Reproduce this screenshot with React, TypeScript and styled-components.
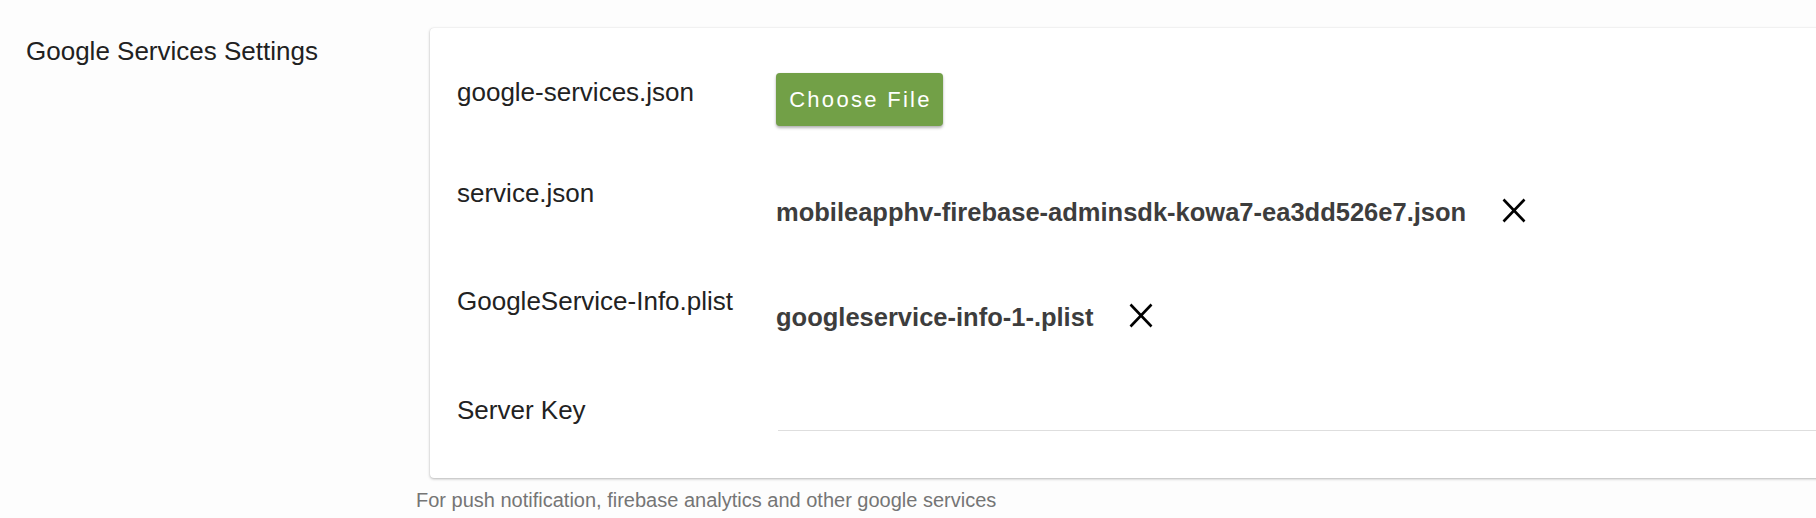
import React from "react";
import styled, { createGlobalStyle } from "styled-components";

const GlobalStyle = createGlobalStyle`
  html, body {
    margin: 0;
    padding: 0;
    background: #fdfdfd;
    overflow: hidden;
  }
  body {
    font-family: "Liberation Sans", Arial, Helvetica, sans-serif;
    color: #222;
  }
`;

const Page = styled.div`
  display: grid;
  grid-template-columns: 416px 1fr;
  padding-top: 28px;
  width: 100%;
  box-sizing: border-box;
`;

const SectionTitle = styled.h2`
  margin: 0;
  padding: 8px 0 0 26px;
  font-size: 26px;
  line-height: 30px;
  font-weight: 400;
  color: #212121;
`;

const Body = styled.div`
  display: flex;
  flex-direction: column;
  min-width: 0;
`;

const Card = styled.div`
  margin-left: 14px;
  margin-right: -40px;
  background: #ffffff;
  border-radius: 4px;
  box-shadow: 0 1px 3px rgba(0, 0, 0, 0.28), 0 0 1px rgba(0, 0, 0, 0.12);
  padding: 49px 0 47px 27px;
  display: flex;
  flex-direction: column;
`;

const Row = styled.div<{ $h?: number }>`
  display: grid;
  grid-template-columns: 319px 1fr;
  align-items: start;
  height: ${(p) => (p.$h ? `${p.$h}px` : "auto")};
`;

const Label = styled.div`
  font-size: 26px;
  line-height: 30px;
  color: #222;
  white-space: nowrap;
`;

const Value = styled.div<{ $offset?: number }>`
  display: flex;
  align-items: center;
  gap: 36px;
  margin-top: ${(p) => p.$offset ?? 0}px;
  min-width: 0;
`;

const ChooseButton = styled.button`
  width: 167px;
  height: 53px;
  border: none;
  border-radius: 4px;
  background: #72a047;
  color: #ffffff;
  font-family: "Liberation Sans", Arial, Helvetica, sans-serif;
  font-size: 22px;
  letter-spacing: 2.3px;
  padding: 0 0 0 2px;
  box-shadow: 0 2px 3px rgba(0, 0, 0, 0.3), 0 0 1px rgba(0, 0, 0, 0.15);
  cursor: pointer;
`;

const FileName = styled.span`
  font-size: 25.5px;
  line-height: 30px;
  font-weight: 700;
  color: #3d3d3d;
  white-space: nowrap;
`;

const RemoveButton = styled.button`
  display: flex;
  padding: 0;
  margin: 0 0 4px 0;
  border: none;
  background: transparent;
  cursor: pointer;
`;

const KeyInput = styled.input`
  display: block;
  width: 100%;
  height: 36px;
  margin-left: 2px;
  box-sizing: border-box;
  border: none;
  border-bottom: 1px solid #dedede;
  background: transparent;
  outline: none;
  font-family: "Liberation Sans", Arial, Helvetica, sans-serif;
  font-size: 24px;
`;

const Hint = styled.div`
  margin-top: 10px;
  font-size: 20px;
  line-height: 24px;
  color: #757575;
`;

const CloseIcon = () => (
  <svg width="24" height="25" viewBox="0 0 24 25" aria-hidden="true">
    <path d="M1.5 1.5 L22.5 23.5 M22.5 1.5 L1.5 23.5" stroke="#000" strokeWidth="2.6" fill="none" />
  </svg>
);

export default function App() {
  return (
    <>
      <GlobalStyle />
      <Page>
        <SectionTitle>Google Services Settings</SectionTitle>
        <Body>
          <Card>
            <Row $h={101}>
              <Label>google-services.json</Label>
              <Value $offset={-4}>
                <ChooseButton type="button">Choose File</ChooseButton>
              </Value>
            </Row>
            <Row $h={108}>
              <Label>service.json</Label>
              <Value $offset={19}>
                <FileName>mobileapphv-firebase-adminsdk-kowa7-ea3dd526e7.json</FileName>
                <RemoveButton type="button" aria-label="Remove">
                  <CloseIcon />
                </RemoveButton>
              </Value>
            </Row>
            <Row $h={109}>
              <Label>GoogleService-Info.plist</Label>
              <Value $offset={16}>
                <FileName>googleservice-info-1-.plist</FileName>
                <RemoveButton type="button" aria-label="Remove">
                  <CloseIcon />
                </RemoveButton>
              </Value>
            </Row>
            <Row>
              <Label>Server Key</Label>
              <Value>
                <KeyInput type="text" />
              </Value>
            </Row>
          </Card>
          <Hint>For push notification, firebase analytics and other google services</Hint>
        </Body>
      </Page>
    </>
  );
}
